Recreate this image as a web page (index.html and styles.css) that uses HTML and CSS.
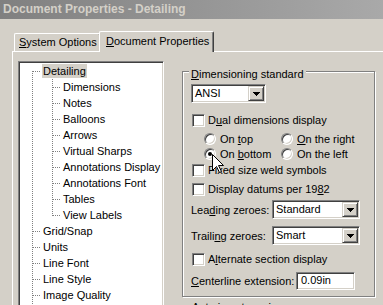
FILE: index.html
```html
<!DOCTYPE html>
<html lang="en">
<head>
    <meta charset="UTF-8">
    <title>Document Properties - Detailing</title>
    <link rel="stylesheet" href="styles.css">
</head>
<body>
    <div class="window">
        <div class="titlebar">Document Properties - Detailing</div>
        <div class="tabs">
            <div class="tab"><u>S</u>ystem Options</div>
            <div class="tab active"><u>D</u>ocument Properties</div>
        </div>
        <div class="panel">
            <div class="tree">
                <div class="node root first"><span class="label sel">Detailing</span></div>
                <div class="node child"><span class="label">Dimensions</span></div>
                <div class="node child"><span class="label">Notes</span></div>
                <div class="node child"><span class="label">Balloons</span></div>
                <div class="node child"><span class="label">Arrows</span></div>
                <div class="node child"><span class="label">Virtual Sharps</span></div>
                <div class="node child"><span class="label">Annotations Display</span></div>
                <div class="node child"><span class="label">Annotations Font</span></div>
                <div class="node child"><span class="label">Tables</span></div>
                <div class="node child last"><span class="label">View Labels</span></div>
                <div class="node root"><span class="label">Grid/Snap</span></div>
                <div class="node root"><span class="label">Units</span></div>
                <div class="node root"><span class="label">Line Font</span></div>
                <div class="node root"><span class="label">Line Style</span></div>
                <div class="node root"><span class="label">Image Quality</span></div>
            </div>
            <div class="options">
                <fieldset class="group">
                    <legend><u>D</u>imensioning standard</legend>
                    <div class="combo std"><span class="value">ANSI</span><span class="drop"><svg width="7" height="4" viewBox="0 0 7 4"><path d="M0 0h7v1H0zM1 1h5v1H1zM2 2h3v1H2zM3 3h1v1H3z"/></svg></span></div>
                    <div class="row check gap9"><span class="box"></span><span>D<u>u</u>al dimensions display</span></div>
                    <div class="radios">
                        <div class="radio"><span class="circle"></span><span>On <u>t</u>op</span></div>
                        <div class="radio"><span class="circle"></span><span><u>O</u>n the right</span></div>
                        <div class="radio on"><span class="circle"></span><span>On <u>b</u>ottom</span></div>
                        <div class="radio"><span class="circle"></span><span>On the left</span></div>
                    </div>
                    <div class="row check gap1"><span class="box"></span><span>Fixed size weld symbols</span></div>
                    <div class="row check gap3"><span class="box"></span><span>Display datums per 19<u>8</u>2</span></div>
                    <div class="field gap3">
                        <span class="caption">Lea<u>d</u>ing zeroes:</span>
                        <div class="combo wide"><span class="value">Standard</span><span class="drop"><svg width="7" height="4" viewBox="0 0 7 4"><path d="M0 0h7v1H0zM1 1h5v1H1zM2 2h3v1H2zM3 3h1v1H3z"/></svg></span></div>
                    </div>
                    <div class="field gap7">
                        <span class="caption">Traili<u>n</u>g zeroes:</span>
                        <div class="combo wide"><span class="value">Smart</span><span class="drop"><svg width="7" height="4" viewBox="0 0 7 4"><path d="M0 0h7v1H0zM1 1h5v1H1zM2 2h3v1H2zM3 3h1v1H3z"/></svg></span></div>
                    </div>
                    <div class="row check gap6"><span class="box"></span><span>A<u>l</u>ternate section display</span></div>
                    <div class="field gap5">
                        <span class="caption long"><u>C</u>enterline extension:</span>
                        <div class="textbox">0.09in</div>
                    </div>
                </fieldset>
                <div class="more">Auto insert on view</div>
            </div>
        </div>
        <svg class="cursor" width="13" height="20" viewBox="0 0 13 20">
            <path d="M0.5 0.5V16.5L4.5 12.5L7.5 18.5L9.5 17.5L6.5 11.5H11.5Z" fill="#fff" stroke="#000" stroke-linejoin="miter"/>
        </svg>
    </div>
</body>
</html>
```

FILE: styles.css
```css
:root {
    --v: repeating-linear-gradient(#808080 0 1px, transparent 1px 2px);
    --h: repeating-linear-gradient(90deg, #808080 0 1px, transparent 1px 2px);
}

body {
    margin: 0;
    background: #d4d0c8;
    font: 11px "Liberation Sans", Arial, sans-serif;
    color: #000;
    overflow: hidden;
}

.window {
    position: relative;
    width: 383px;
    height: 305px;
    overflow: hidden;
}

.titlebar {
    height: 19px;
    line-height: 19px;
    padding-left: 3px;
    font-size: 12px;
    font-weight: bold;
    color: #d4d0c8;
    background: linear-gradient(90deg, #808080, #a9a9a9);
    white-space: nowrap;
}

/* tabs */
.tabs {
    display: flex;
    align-items: flex-end;
    height: 20px;
    margin-top: 12px;
    padding-left: 14px;
}

.tab {
    box-sizing: border-box;
    width: 87px;
    height: 18px;
    line-height: 17px;
    padding-left: 4px;
    border-top: 1px solid #fff;
    border-left: 1px solid #fff;
    border-right: 1px solid #404040;
    border-radius: 2px 2px 0 0;
    box-shadow: inset -1px 0 #808080;
    white-space: nowrap;
}

.tab.active {
    position: relative;
    z-index: 1;
    width: 115px;
    height: 21px;
    line-height: 18px;
    margin-left: -2px;
    margin-bottom: -1px;
    padding-left: 6px;
    background: #d4d0c8;
}

.panel {
    display: flex;
    align-items: flex-start;
    height: 300px;
    margin-left: 12px;
    border-top: 1px solid #fff;
    border-left: 1px solid #fff;
}

/* tree view */
.tree {
    box-sizing: border-box;
    width: 146px;
    height: 260px;
    margin: 9px 0 0 5px;
    padding: 1px 0 0 1px;
    background: var(--v) 13px 9px / 1px 100% no-repeat, #fff;
    border: 1px solid;
    border-color: #808080 #fff #fff #808080;
    box-shadow: inset 1px 1px #404040, inset -1px -1px #d4d0c8;
    overflow: hidden;
}

.node {
    display: flex;
    align-items: center;
    height: 16px;
    white-space: nowrap;
}

.node.root {
    padding-left: 22px;
    background: var(--h) 13px 8px / 8px 1px no-repeat;
}

.node.child {
    padding-left: 42px;
    background: var(--h) 33px 8px / 8px 1px no-repeat,
                var(--v) 32px 0 / 1px 100% no-repeat;
}

.node.child.last {
    background: var(--h) 33px 8px / 8px 1px no-repeat,
                var(--v) 32px 0 / 1px 9px no-repeat;
}

.label {
    line-height: 14px;
    padding: 0 1px;
}

.label.sel {
    background: #d4d0c8;
}

/* options */
.options {
    margin-left: 18px;
}

.group {
    box-sizing: border-box;
    width: 193px;
    min-inline-size: auto;
    margin: 10px 0 0;
    padding: 3px 8px 6px;
    border: 1px solid #808080;
    box-shadow: 1px 1px #fff, inset 1px 1px #fff;
}

.group legend {
    margin-left: -2px;
    padding: 6px 2px 0;
    line-height: 13px;
    background: #d4d0c8;
}

.row {
    display: flex;
    align-items: center;
    height: 16px;
    white-space: nowrap;
}

.gap1 { margin-top: 1px; }
.gap3 { margin-top: 3px; }
.gap5 { margin-top: 5px; }
.gap6 { margin-top: 6px; }
.gap7 { margin-top: 7px; }
.gap9 { margin-top: 9px; }

.box {
    box-sizing: border-box;
    width: 13px;
    height: 13px;
    margin: 0 3px 0 1px;
    background: #fff;
    border: 1px solid;
    border-color: #808080 #fff #fff #808080;
    box-shadow: inset 1px 1px #404040, inset -1px -1px #d4d0c8;
}

.radios {
    display: grid;
    grid-template-columns: 77px auto;
    margin: 3px 0 0 13px;
}

.radio {
    display: flex;
    align-items: center;
    gap: 4px;
    height: 15px;
    white-space: nowrap;
}

.circle {
    box-sizing: border-box;
    display: flex;
    align-items: center;
    justify-content: center;
    width: 12px;
    height: 12px;
    border-radius: 50%;
    background: #fff;
    border: 1px solid;
    border-color: #808080 #fff #fff #808080;
    box-shadow: inset 1px 1px #404040, inset -1px -1px #d4d0c8;
}

.radio.on .circle::after {
    content: "";
    width: 4px;
    height: 4px;
    border-radius: 50%;
    background: #000;
}

.combo {
    box-sizing: border-box;
    display: flex;
    height: 19px;
    padding: 1px;
    background: #fff;
    border: 1px solid;
    border-color: #808080 #fff #fff #808080;
    box-shadow: inset 1px 1px #404040, inset -1px -1px #d4d0c8;
}

.combo.std { width: 75px; }
.combo.wide { width: 88px; }

.combo .value {
    flex: 1;
    padding-left: 2px;
    line-height: 15px;
}

.drop {
    box-sizing: border-box;
    display: flex;
    align-items: center;
    justify-content: center;
    width: 16px;
    height: 15px;
    background: #d4d0c8;
    border: 1px solid;
    border-color: #d4d0c8 #404040 #404040 #d4d0c8;
    box-shadow: inset 1px 1px #fff, inset -1px -1px #808080;
}

.field {
    display: flex;
    align-items: center;
    white-space: nowrap;
}

.caption {
    width: 81px;
}

.caption.long {
    width: 105px;
}

.textbox {
    box-sizing: border-box;
    width: 59px;
    height: 18px;
    padding-left: 4px;
    line-height: 14px;
    background: #fff;
    border: 1px solid;
    border-color: #808080 #fff #fff #808080;
    box-shadow: inset 1px 1px #404040, inset -1px -1px #d4d0c8;
}

.more {
    margin-top: 4px;
    padding-left: 10px;
    line-height: 13px;
    white-space: nowrap;
}

.cursor {
    position: absolute;
    left: 212px;
    top: 154px;
}
```
